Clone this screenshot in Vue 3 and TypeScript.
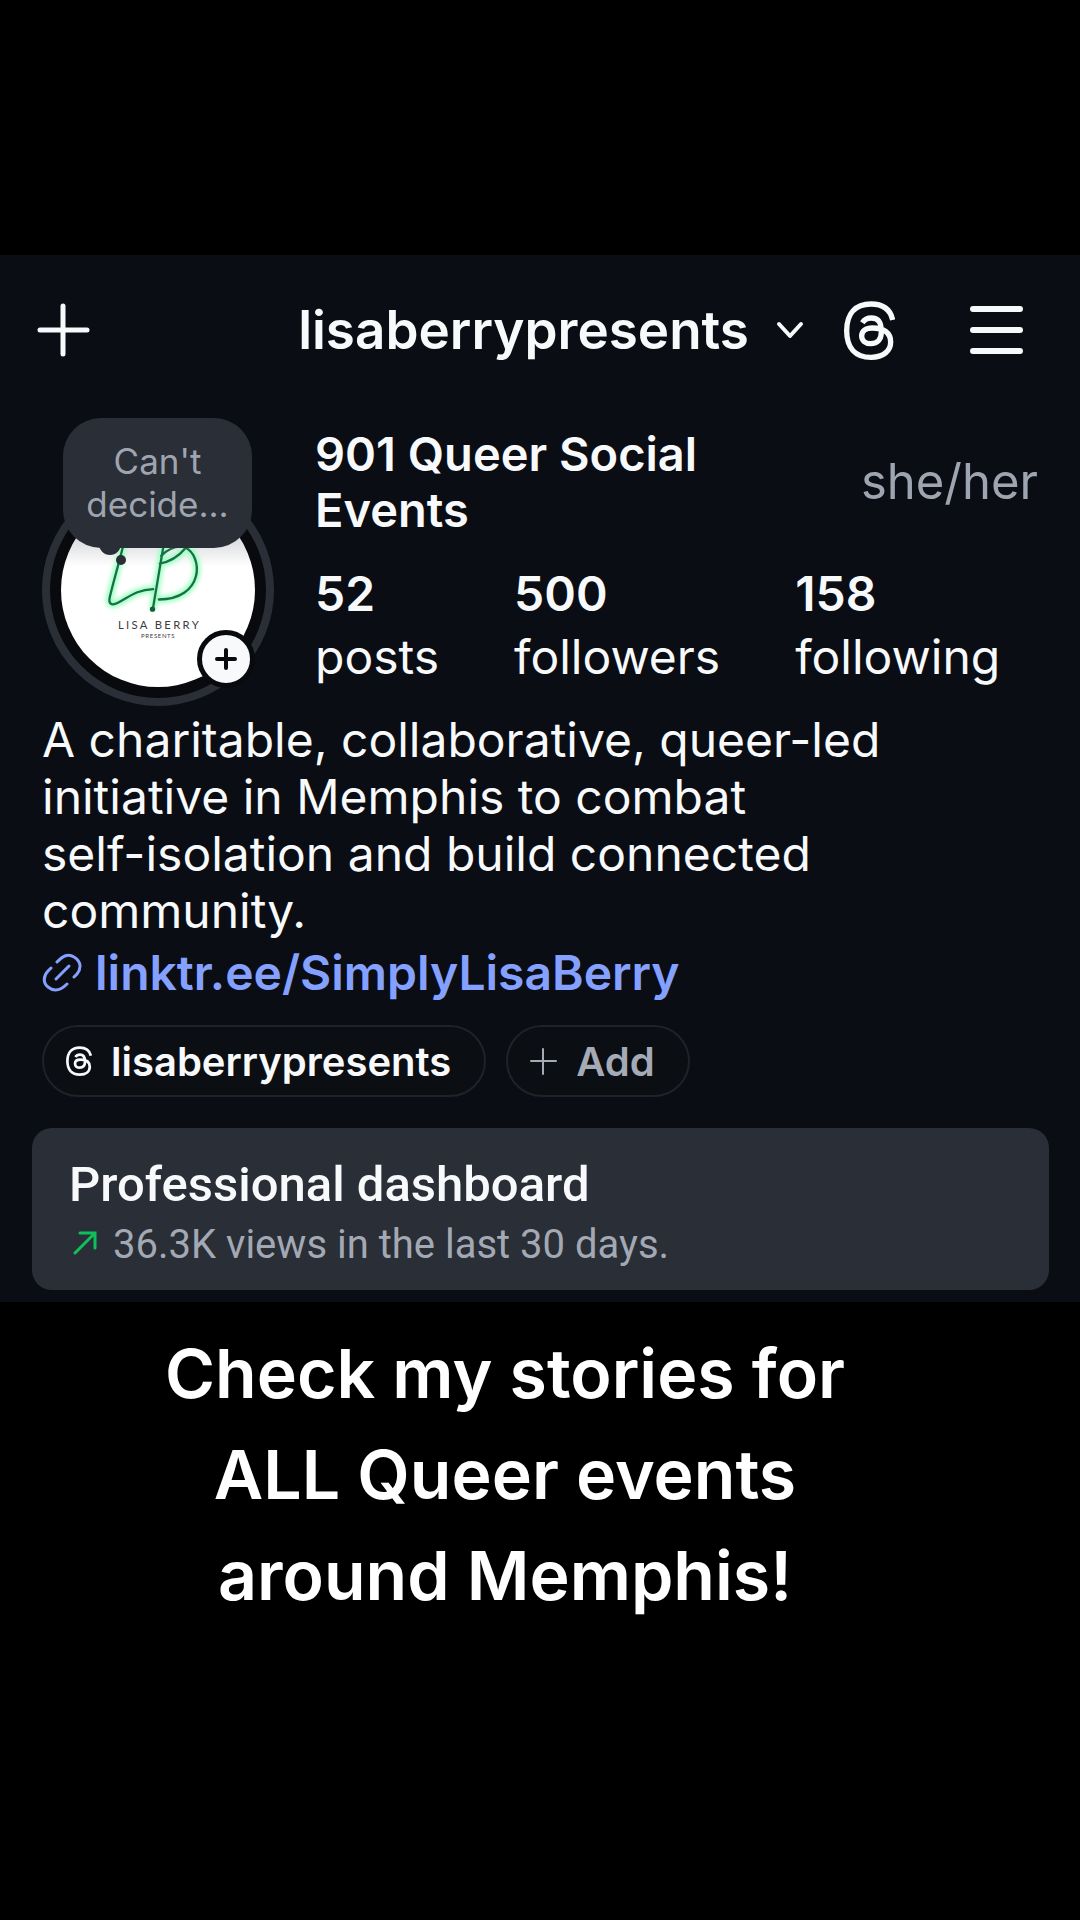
<script setup lang="ts">
interface Stat {
  value: string
  label: string
}

const username = 'lisaberrypresents'
const stats: Stat[] = [
  { value: '52', label: 'posts' },
  { value: '500', label: 'followers' },
  { value: '158', label: 'following' },
]
const bioLines = [
  'A charitable, collaborative, queer-led',
  'initiative in Memphis to combat',
  'self-isolation and build connected',
  'community.',
]
const captionLines = ['Check my stories for', 'ALL Queer events', 'around Memphis!']
const threadsPath =
  'M215 118C208 86 186 70 150 70C103 70 77 99 77 150C77 201 103 230 150 230C188 230 209 210 209 184C209 156 188 142 154 142C134 142 122 151 122 166C122 180 134 189 149 189C170 189 181 176 181 153C181 126 173 112 151 112C139 112 130 117 124 126'
</script>

<template>
  <main class="page">
    <section class="profile">
      <header class="topbar">
        <button class="icon-btn" type="button" aria-label="Create">
          <svg width="54" height="54" viewBox="0 0 54 54" fill="none" stroke="currentColor" stroke-width="5" stroke-linecap="round">
            <path d="M27 3v48M4 27h47" />
          </svg>
        </button>
        <button class="account" type="button">
          <h1>{{ username }}</h1>
          <svg width="28" height="18" viewBox="0 0 28 18" fill="none" stroke="currentColor" stroke-width="4" stroke-linecap="round" stroke-linejoin="round">
            <path d="M3 3l11 12L25 3" />
          </svg>
        </button>
        <button class="icon-btn threads" type="button" aria-label="Threads">
          <svg width="51" height="59" viewBox="69 61 153 177" fill="none" stroke="currentColor" stroke-width="16">
            <path :d="threadsPath" />
          </svg>
        </button>
        <button class="icon-btn" type="button" aria-label="Menu">
          <svg width="53" height="54" viewBox="0 0 53 54" fill="none" stroke="currentColor" stroke-width="6" stroke-linecap="round">
            <path d="M3 6h47M3 27h47M3 48h47" />
          </svg>
        </button>
      </header>

      <div class="summary">
        <div class="avatar">
          <div class="ring">
            <svg class="photo" viewBox="123 279 583 583" role="img" aria-label="Lisa Berry Presents logo">
              <defs>
                <filter id="glow" x="-30%" y="-30%" width="160%" height="160%">
                  <feGaussianBlur stdDeviation="7" />
                </filter>
                <linearGradient id="shade" x1="0" y1="0" x2="0" y2="1">
                  <stop offset="0.25" stop-color="#dedfe2" />
                  <stop offset="0.38" stop-color="#fff" />
                </linearGradient>
              </defs>
              <rect x="123" y="279" width="583" height="583" fill="url(#shade)" />
              <g fill="none" stroke="#9dffc0" stroke-width="22" filter="url(#glow)">
                <path d="M314 420C300 480 282 540 270 590C264 614 276 618 294 609C330 590 350 570 400 568" />
                <path d="M434 420L399 628M420 491C450 486 476 470 496 446M496 442C552 470 552 598 417 599" />
              </g>
              <g fill="none" stroke="#177047" stroke-width="7" stroke-linecap="round">
                <path d="M314 420C300 480 282 540 270 590C264 614 276 618 294 609C330 590 350 570 400 568" />
                <path d="M434 420L399 628M420 491C450 486 476 470 496 446M424 468C446 446 470 436 496 442C552 470 552 598 417 599" />
              </g>
              <circle cx="398" cy="628" r="8" fill="#12603c" />
              <text x="419" y="687" class="logo-name">LISA BERRY</text>
              <text x="415" y="715" class="logo-sub">PRESENTS</text>
            </svg>
          </div>
          <div class="note">
            <p>Can't<br />decide...</p>
          </div>
          <button class="badge" type="button" aria-label="Add story">
            <svg width="24" height="24" viewBox="0 0 24 24" fill="none" stroke="currentColor" stroke-width="4" stroke-linecap="round">
              <path d="M12 3v18M3 12h18" />
            </svg>
          </button>
        </div>

        <div class="info">
          <div class="identity">
            <h2>901 Queer Social Events</h2>
            <span class="pronouns">she/her</span>
          </div>
          <dl class="stats">
            <div v-for="stat in stats" :key="stat.label" class="stat">
              <dt>{{ stat.label }}</dt>
              <dd>{{ stat.value }}</dd>
            </div>
          </dl>
        </div>
      </div>

      <div class="about">
        <p class="bio">
          <template v-for="line in bioLines" :key="line">{{ line }}<br /></template>
        </p>
        <a class="link" href="#linktree">
          <svg width="40" height="40" viewBox="-1 0 40 40" fill="none" stroke="currentColor" stroke-width="3" stroke-linecap="round">
            <path d="M14 9C20 3 25 0 31 4C39 9 38 16 34 21L31 24" />
            <path d="M8 15L5 18C0 23 0 30 5 34C11 39 17 38 24 31" />
            <path d="M13 26L26 13" />
          </svg>
          <span>linktr.ee/SimplyLisaBerry</span>
        </a>
        <div class="chips">
          <button class="chip" type="button">
            <svg width="26" height="30" viewBox="69 61 153 177" fill="none" stroke="currentColor" stroke-width="16">
              <path :d="threadsPath" />
            </svg>
            <span>{{ username }}</span>
          </button>
          <button class="chip muted" type="button">
            <svg width="27" height="27" viewBox="0 0 27 27" fill="none" stroke="currentColor" stroke-width="2" stroke-linecap="round">
              <path d="M13 1v25M1 13h25" />
            </svg>
            <span>Add</span>
          </button>
        </div>
      </div>

      <button class="dashboard" type="button">
        <strong>Professional dashboard</strong>
        <span class="views">
          <svg width="24" height="28" viewBox="0 0 24 28" fill="none" stroke="#0fbf5c" stroke-width="3" stroke-linecap="round" stroke-linejoin="miter">
            <path d="M2 22L21 3M7 2h15v15" />
          </svg>
          <span>36.3K views in the last 30 days.</span>
        </span>
      </button>
    </section>

    <p class="caption">
      <template v-for="line in captionLines" :key="line">{{ line }}<br /></template>
    </p>
  </main>
</template>

<style>
body {
  background: #000;
}
</style>

<style scoped>
.page {
  min-height: 100vh;
  box-sizing: border-box;
  padding-top: 255px;
  background: #000;
  color: #f7f9fb;
  font-family: Inter, "Liberation Sans", sans-serif;
}

h1, h2, p, dl, dd {
  margin: 0;
}

button {
  margin: 0;
  padding: 0;
  border: 0;
  background: none;
  color: inherit;
  font: inherit;
  cursor: pointer;
}

svg {
  display: block;
  flex: none;
}

.profile {
  padding-bottom: 12px;
  background: #0a0d14;
}

.topbar {
  display: flex;
  align-items: center;
  height: 150px;
  padding: 0 57px 0 36px;
}

.account {
  display: flex;
  align-items: center;
  gap: 27px;
  margin-left: auto;
}

.account h1 {
  font-size: 53px;
  font-weight: 600;
  line-height: 64px;
}

.threads {
  margin: 0 75px 0 40px;
}

.summary {
  display: flex;
  padding: 12px 42px 0;
}

.avatar {
  position: relative;
  flex: none;
  width: 232px;
  padding-top: 57px;
}

.ring {
  box-sizing: border-box;
  height: 232px;
  padding: 11px;
  border: 8px solid #2a2f37;
  border-radius: 50%;
  background: #080a0e;
}

.photo {
  width: 194px;
  height: 194px;
  border-radius: 50%;
}

.logo-name,
.logo-sub {
  font-family: Lato, sans-serif;
  fill: #3c3c42;
  text-anchor: middle;
}

.logo-name {
  font-size: 34px;
  letter-spacing: 7px;
}

.logo-sub {
  font-size: 18px;
  letter-spacing: 2px;
}

.note {
  position: absolute;
  top: 1px;
  left: 21px;
  display: flex;
  align-items: center;
  justify-content: center;
  width: 189px;
  height: 130px;
  border-radius: 38px;
  background: #2a2e36;
  color: #9fa5b0;
  font-size: 35px;
  line-height: 43px;
  text-align: center;
}

.note::before,
.note::after {
  content: "";
  position: absolute;
  border-radius: 50%;
  background: #2a2e36;
}

.note::before {
  left: 36px;
  bottom: -7px;
  width: 22px;
  height: 22px;
}

.note::after {
  left: 53px;
  bottom: -17px;
  width: 10px;
  height: 10px;
}

.badge {
  position: absolute;
  right: 19px;
  bottom: 18px;
  display: flex;
  align-items: center;
  justify-content: center;
  width: 58px;
  height: 58px;
  border: 5px solid #080a0e;
  border-radius: 50%;
  background: #f7f9fb;
  color: #080a0e;
}

.info {
  flex: 1;
  padding: 9px 0 0 41px;
}

.identity {
  display: flex;
  align-items: center;
  justify-content: space-between;
}

.identity h2 {
  width: 440px;
  font-size: 47px;
  font-weight: 600;
  line-height: 56px;
}

.pronouns {
  color: #9fa5b0;
  font-size: 49px;
  line-height: 56px;
}

.stats {
  display: flex;
  gap: 75px;
  padding-top: 24px;
  font-size: 48px;
  line-height: 63px;
}

.stat {
  display: flex;
  flex-direction: column-reverse;
}

.stat dd {
  font-weight: 600;
}

.about {
  padding: 5px 42px 0;
}

.bio {
  font-size: 48px;
  line-height: 57px;
}

.link {
  display: flex;
  align-items: center;
  gap: 13px;
  width: fit-content;
  margin-top: 5px;
  color: #85a1ff;
  font-size: 48px;
  font-weight: 600;
  line-height: 57px;
  text-decoration: none;
}

.chips {
  display: flex;
  gap: 20px;
  padding-top: 24px;
}

.chip {
  display: flex;
  align-items: center;
  gap: 19px;
  height: 72px;
  padding: 0 33px 0 22px;
  border: 2px solid #1f2328;
  border-radius: 36px;
  background: #0b0e12;
  font-size: 40px;
  font-weight: 600;
}

.muted {
  color: #a5abb6;
}

.dashboard {
  display: flex;
  flex-direction: column;
  gap: 4px;
  width: calc(100% - 63px);
  margin: 31px 31px 0 32px;
  padding: 29px 36px 17px 37px;
  border-radius: 20px;
  background: #2a2e36;
  font-family: Roboto, sans-serif;
  line-height: 56px;
  text-align: left;
}

.dashboard strong {
  font-size: 49px;
  font-weight: 500;
}

.views {
  display: flex;
  align-items: center;
  gap: 16px;
  padding-left: 4px;
  color: #a3a9b4;
  font-size: 40px;
}

.caption {
  padding: 21px 70px 0 0;
  color: #fff;
  font-size: 68px;
  font-weight: 600;
  line-height: 101px;
  text-align: center;
}
</style>
